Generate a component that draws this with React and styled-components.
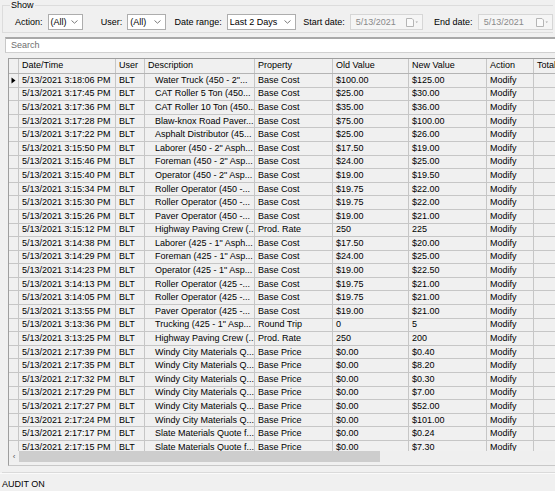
import React from "react";
import styled, { createGlobalStyle } from "styled-components";

const GlobalStyle = createGlobalStyle`
  body {
    margin: 0;
    background: #f0f0f0;
    font-family: "Liberation Sans", Arial, sans-serif;
    font-size: 9px;
    color: #000;
  }
`;

const Page = styled.div`
  width: 555px;
  height: 491px;
  display: flex;
  flex-direction: column;
  overflow: hidden;
  background: #f0f0f0;
`;

const GroupBox = styled.fieldset`
  margin: 0 2px 1px 2px;
  padding: 3px 0 2px 10px;
  min-width: 0;
  border: 1px solid #dcdcdc;
  border-right: none;
  legend {
    font-size: 9px;
    line-height: 11px;
    padding: 0 1px;
    margin-left: -3px;
    color: #000;
  }
`;

const FilterRow = styled.div`
  display: flex;
  align-items: center;
  height: 16px;
`;

const Label = styled.span`
  margin-left: ${(p) => p.$gap || 0}px;
  margin-right: 5px;
  white-space: nowrap;
`;

const Combo = styled.div`
  width: ${(p) => p.$w}px;
  height: 16px;
  box-sizing: border-box;
  border: 1px solid #adadad;
  background: #fff;
  display: flex;
  align-items: center;
  justify-content: space-between;
  padding: 0 4px 0 2px;
  white-space: nowrap;
`;

const DateBox = styled(Combo)`
  background: #f5f5f5;
  border-color: #d6d6d6;
  color: #8a8a8a;
  padding: 0 3px 0 5px;
`;

const DateIcon = () => (
  <svg width="13" height="9" viewBox="0 0 13 9">
    <path d="M0.5 0.5 H6 L7.5 2 V8.5 H0.5 Z" fill="#fafafa" stroke="#b5b5b5" />
    <path d="M9.5 3.5 L12 3.5 L10.75 5 Z" fill="#a8a8a8" />
  </svg>
);

const Chevron = () => (
  <svg width="7" height="4" viewBox="0 0 7 4">
    <polyline points="0.5,0.5 3.5,3.2 6.5,0.5" fill="none" stroke="#7a7a7a" />
  </svg>
);

const SearchBox = styled.div`
  margin: 3px 0 0 5px;
  height: 16px;
  box-sizing: border-box;
  background: #fff;
  border-top: 2px solid #a8a8a8;
  border-left: 1px solid #c8c8c8;
  border-bottom: 1px solid #d0d0d0;
  color: #6e6e6e;
  padding-left: 5px;
  display: flex;
  align-items: center;
`;

const GridFrame = styled.div`
  margin: 5px 0 0 8px;
  height: 409px;
  box-sizing: border-box;
  padding-bottom: 3px;
  border-top: 1px solid #9e9e9e;
  border-left: 1px solid #9e9e9e;
  border-bottom: 1px solid #c8c8c8;
  display: flex;
  flex-direction: column;
  overflow: hidden;
`;

const cols = "10px 97px 29px 110px 78px 76px 78px 47px 80px";

const Row = styled.div`
  display: grid;
  grid-template-columns: ${cols};
  height: ${(p) => (p.$header ? 15 : 13.6)}px;
  box-sizing: border-box;
  border-bottom: 1px solid ${(p) => (p.$header ? "#b4b4b4" : "#c6c6c6")};
  flex-shrink: 0;
`;

const Cell = styled.div`
  border-right: 1px solid #c6c6c6;
  padding-left: ${(p) => p.$indent || 3}px;
  white-space: nowrap;
  overflow: hidden;
  display: flex;
  align-items: center;
  line-height: 1;
`;

const Indicator = styled(Cell)`
  padding-left: 2px;
`;

const Body = styled.div`
  flex: 1;
  overflow: hidden;
  display: flex;
  flex-direction: column;
`;

const HScroll = styled.div`
  height: 11px;
  flex-shrink: 0;
  display: flex;
  background: #efefef;
`;

const ScrollArrow = styled.div`
  width: 10px;
  display: flex;
  align-items: center;
  justify-content: center;
  color: #555;
  font-size: 8px;
`;

const ScrollThumb = styled.div`
  width: 361px;
  background: #cdcdcd;
`;

const Spacer = styled.div`
  height: 6px;
  border-bottom: 1px solid #dadada;
  margin-left: 2px;
`;

const StatusBar = styled.div`
  height: 18px;
  display: flex;
  align-items: flex-end;
  padding: 0 0 2px 2px;
  box-sizing: border-box;
  border-top: 1px solid #fafafa;
`;

const Triangle = () => (
  <svg width="5" height="7" viewBox="0 0 5 7">
    <polygon points="0.5,0.5 4.5,3.5 0.5,6.5" fill="#000" />
  </svg>
);

const rows = [
  ["3:18:06", "Water Truck (450 - 2\"...", "Base Cost", "$100.00", "$125.00"],
  ["3:17:45", "CAT Roller 5 Ton (450...", "Base Cost", "$25.00", "$30.00"],
  ["3:17:36", "CAT Roller 10 Ton (450...", "Base Cost", "$35.00", "$36.00"],
  ["3:17:28", "Blaw-knox Road Paver...", "Base Cost", "$75.00", "$100.00"],
  ["3:17:22", "Asphalt Distributor (45...", "Base Cost", "$25.00", "$26.00"],
  ["3:15:50", "Laborer (450 - 2\" Asph...", "Base Cost", "$17.50", "$19.00"],
  ["3:15:46", "Foreman (450 - 2\" Asp...", "Base Cost", "$24.00", "$25.00"],
  ["3:15:40", "Operator (450 - 2\" Asp...", "Base Cost", "$19.00", "$19.50"],
  ["3:15:34", "Roller Operator (450 -...", "Base Cost", "$19.75", "$22.00"],
  ["3:15:30", "Roller Operator (450 -...", "Base Cost", "$19.75", "$22.00"],
  ["3:15:26", "Paver Operator (450 -...", "Base Cost", "$19.00", "$21.00"],
  ["3:15:12", "Highway Paving Crew (...", "Prod. Rate", "250", "225"],
  ["3:14:38", "Laborer (425 - 1\" Asph...", "Base Cost", "$17.50", "$20.00"],
  ["3:14:29", "Foreman (425 - 1\" Asp...", "Base Cost", "$24.00", "$25.00"],
  ["3:14:23", "Operator (425 - 1\" Asp...", "Base Cost", "$19.00", "$22.50"],
  ["3:14:13", "Roller Operator (425 -...", "Base Cost", "$19.75", "$21.00"],
  ["3:14:05", "Roller Operator (425 -...", "Base Cost", "$19.75", "$21.00"],
  ["3:13:55", "Paver Operator (425 -...", "Base Cost", "$19.00", "$21.00"],
  ["3:13:36", "Trucking (425 - 1\" Asp...", "Round Trip", "0", "5"],
  ["3:13:25", "Highway Paving Crew (...", "Prod. Rate", "250", "200"],
  ["2:17:39", "Windy City Materials Q...", "Base Price", "$0.00", "$0.40"],
  ["2:17:35", "Windy City Materials Q...", "Base Price", "$0.00", "$8.20"],
  ["2:17:32", "Windy City Materials Q...", "Base Price", "$0.00", "$0.30"],
  ["2:17:29", "Windy City Materials Q...", "Base Price", "$0.00", "$7.00"],
  ["2:17:27", "Windy City Materials Q...", "Base Price", "$0.00", "$52.00"],
  ["2:17:24", "Windy City Materials Q...", "Base Price", "$0.00", "$101.00"],
  ["2:17:17", "Slate Materials Quote f...", "Base Price", "$0.00", "$0.24"],
  ["2:17:15", "Slate Materials Quote f...", "Base Price", "$0.00", "$7.30"],
];

const headers = ["Date/Time", "User", "Description", "Property", "Old Value", "New Value", "Action", "Total"];

export default function App() {
  return (
    <Page>
      <GlobalStyle />
      <GroupBox>
        <legend>Show</legend>
        <FilterRow>
          <Label $gap={2}>Action:</Label>
          <Combo $w={36}>
            (All) <Chevron />
          </Combo>
          <Label $gap={18}>User:</Label>
          <Combo $w={39}>
            (All) <Chevron />
          </Combo>
          <Label $gap={9}>Date range:</Label>
          <Combo $w={71}>
            Last 2 Days <Chevron />
          </Combo>
          <Label $gap={7}>Start date:</Label>
          <DateBox $w={75}>
            5/13/2021 <DateIcon />
          </DateBox>
          <Label $gap={11}>End date:</Label>
          <DateBox $w={77}>
            5/13/2021 <DateIcon />
          </DateBox>
        </FilterRow>
      </GroupBox>
      <SearchBox>Search</SearchBox>
      <GridFrame>
        <Row $header>
          <Indicator />
          {headers.map((h) => (
            <Cell key={h}>{h}</Cell>
          ))}
        </Row>
        <Body>
          {rows.map(([time, desc, prop, oldV, newV], i) => (
            <Row key={i}>
              <Indicator>{i === 0 && <Triangle />}</Indicator>
              <Cell>5/13/2021 {time} PM</Cell>
              <Cell>BLT</Cell>
              <Cell $indent={10}>{desc}</Cell>
              <Cell>{prop}</Cell>
              <Cell>{oldV}</Cell>
              <Cell>{newV}</Cell>
              <Cell>Modify</Cell>
              <Cell />
            </Row>
          ))}
        </Body>
        <HScroll>
          <ScrollArrow>&lsaquo;</ScrollArrow>
          <ScrollThumb />
        </HScroll>
      </GridFrame>
      <Spacer />
      <StatusBar>AUDIT ON</StatusBar>
    </Page>
  );
}
